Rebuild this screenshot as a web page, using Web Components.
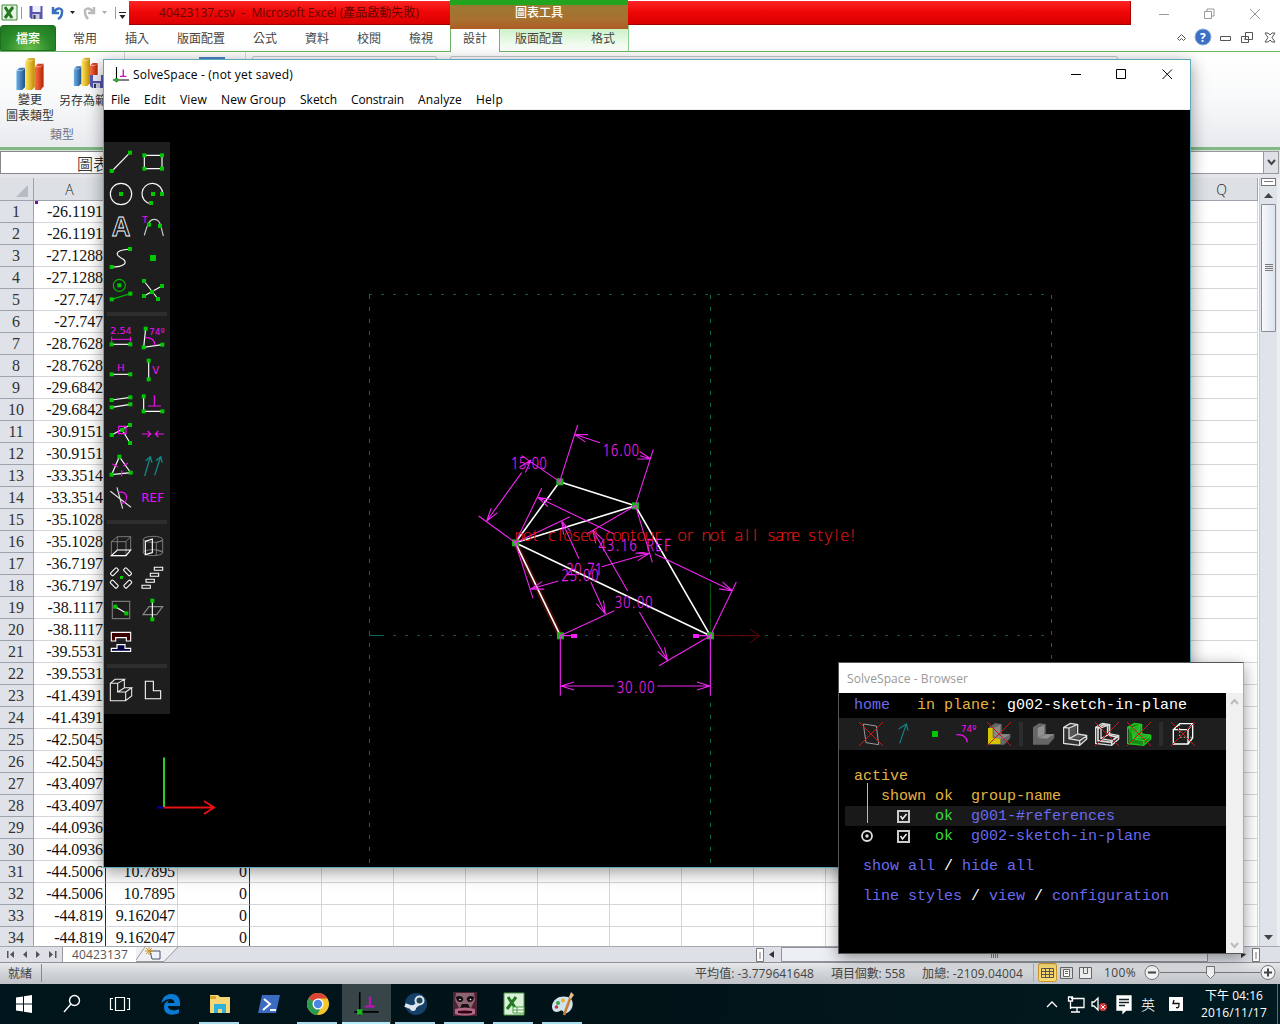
<!DOCTYPE html>
<html lang="zh-Hant">
<head>
<meta charset="utf-8">
<title>Desktop</title>
<style>
html,body{margin:0;width:1280px;height:1024px;overflow:hidden;background:#fff}
body{font-family:"Open Sans","Noto Sans CJK TC",sans-serif;font-size:12px}
</style>
</head>
<body>
<desk-top></desk-top>
<script>
const make = (name, css, html, after) => customElements.define(name, class extends HTMLElement {
  connectedCallback() {
    if (this.shadowRoot) return;
    const r = this.attachShadow({mode: 'open'});
    r.innerHTML = `<style>:host{display:block;box-sizing:border-box}*{box-sizing:border-box}svg{display:block}${css}</style>` + (typeof html === 'function' ? html(this) : html);
    if (after) after(this, r);
  }
});

/* Text run stretched to a fixed advance width through letter spacing. */
make('ui-text', ':host{display:block;flex:none;white-space:pre}span{display:inline-block}', '<span><slot></slot></span>', (el, r) => {
  const w = +el.getAttribute('w');
  if (!w) return;
  const s = r.querySelector('span');
  el.style.width = w + 'px';
  s.style.letterSpacing = (w - s.getBoundingClientRect().width) / el.textContent.length + 'px';
});

/* ---------- icon helpers (three units per pixel, centred on 0,0) ---------- */
const G = '#00c800', M = '#f010f0', W = '#fafafa';
const sq = (...p) => p.map(([x, y]) => `<rect x="${x - 6}" y="${y - 6}" width="12" height="12" fill="${G}"/>`).join('');
const ln = (d, c = W, w = 3.5, f = 'none') => `<path d="${d}" stroke="${c}" stroke-width="${w}" fill="${f}"/>`;
const tx = (t, x, y, s, w, c = M) => `<text x="${x}" y="${y}" font-size="${s}" textLength="${w}" lengthAdjust="spacingAndGlyphs" fill="${c}" font-family="DejaVu Sans">${t}</text>`;
const icon = (b) => `<svg width="32" height="32" viewBox="-48 -48 96 96">${b}</svg>`;
const cross = ln('M-36-36L36 36M36-36L-36 36', '#c81818', 3);

const tools = [
  ln('M-27 27L27-28') + sq([-28, 27], [27, -28]),
  ln('M-26-20H27V20H-26Z', W, 3.5) + sq([-26, -20], [27, -20], [-26, 20], [27, 20]),
  `<circle r="32" fill="none" stroke="${W}" stroke-width="3.5"/>` + sq([0, 0]),
  ln('M29 0A31 31 0 1 0 -6 30') + sq([0, 0], [27, 0], [-6, 27]),
  `<text x="-28" y="31" font-size="84" font-weight="bold" textLength="56" lengthAdjust="spacingAndGlyphs" fill="none" stroke="${W}" stroke-width="2.600" font-family="Liberation Sans">A</text>`,
  tx('T', -33, -10, 27, 17) + ln('M-26 28C-18 0-13-20 4-20C22-20 24 2 31 30', '#ccc') + sq([-12, -4], [21, 0]),
  ln('M-27 27C8 26 21 15 7 4C-12-6-30-22 27-27') + sq([-28, 27], [27, -27]),
  `<rect x="-9" y="-9" width="18" height="18" fill="${G}"/>`,
  `<circle cx="-5" cy="-14" r="18" fill="none" stroke="#00b400" stroke-width="3.500"/>` + ln('M-28 28L28 11', '#00b400') + sq([-5, -14], [-28, 28], [28, 11]),
  ln('M-27-27L15 27M-27 18L27-12') + sq([-27, -27], [15, 27], [-27, 18], [27, -12], [-3, 6]),
  0,
  tx('2.54', -32, -11, 27, 64) + ln('M-28 4H28M-28-4V12M28-4V12', M, 3) + ln('M-28 19H28') + sq([-28, 19], [28, 19]),
  tx('74º', -12, -9, 28, 47) + ln('M-22-28L-28 28L28 20') + ln('M-22-1Q4-2 6 22', M) + sq([-22, -28], [-28, 28], [28, 20]),
  tx('H', -12, 2, 27, 23) + ln('M-28 13H28') + sq([-28, 13], [28, 13]),
  tx('V', -2, 12, 29, 21) + ln('M-13-28V28') + sq([-13, -28], [-13, 28]),
  ln('M-28-6L28-14M-28 16L28 7') + sq([-28, -6], [28, -14], [-28, 16], [28, 7]),
  ln('M-28-17V28H28') + ln('M4-20V12M-15 12H24', M) + sq([-28, -17], [-28, 28], [28, 28]),
  ln('M-28 3L27-27M4-12L27 27') + sq([-28, 3], [4, -12], [27, -27], [27, 27]) + ln('M-7-23H15V-1H-7Z', M),
  ln('M-33 0H-7M-16-9L-7 0L-16 9M33 0H7M16-9L7 0L16 9', M),
  ln('M-5-28L-28 26L29 20Z') + ln('M-26-6L-9 3M7 0L21-9M2 13V31', M) + sq([-5, -28], [-28, 26], [29, 20]),
  ln('M-25 30L-8-28M-22-16L-8-28L-3-10M5 28L23-28M9-16L23-28L28-10', '#108888', 4),
  ln('M-32-20L30 28M-12-32L5 32', '#ddd') + ln('M-7-17C20-22 26 8 2 17', M),
  tx('REF', -35, 13, 36, 68),
  0,
  ln('M-29-13H15V29H-29ZM-11-28H29V12M-29-13L-11-28V12M15-13L29-28', '#888', 2.5) + ln('M-29 29H15L29 12H-11Z', '#fff', 3.5),
  `<g fill="none" stroke="#888" stroke-width="2.5"><ellipse cy="-20" rx="29" ry="9"/><ellipse cy="20" rx="29" ry="9"/><path d="M-29-20V20M29-20V20M10-10L28-16M10 12L28 18M10-10V28"/></g>` + ln('M-23-14L-2-21V20L-23 26Z', '#fff', 3.5),
  [[-20, -19, -45], [20, -19, 45], [-20, 18, 45], [20, 18, -45]].map(([x, y, a]) => `<rect x="-13" y="-5" width="26" height="11" rx="3" transform="translate(${x} ${y})rotate(${a})" fill="none" stroke="#fff" stroke-width="3.2"/>`).join('') + `<rect x="-3" y="-6" width="9" height="9" fill="${G}"/>`,
  ln('M4-32H29V-23H4ZM-8-14H17V-5H-8ZM-21 4H4V13H-21ZM-33 22H-8V31H-33Z', '#fff', 3.2),
  ln('M-26-26H26V26H-26Z', '#777') + ln('M-17-10L16 10') + sq([-17, -10], [16, 10]),
  ln('M-30 14L-12-10H29L11 14Z', '#888') + ln('M-2-28V28', '#fff') + sq([-2, -28], [-2, 28]),
  ln('M-29-29H29V-3H16V-13H-16V-3H-29Z', '#fff', 3.4, '#3c0000') + ln('M-29 28V19H-12V8H12V19H29V28Z', '#fff', 3.4, '#000040'),
  '',
  0,
  ln('M-32 32V-20H-10V6H14V32ZM-32-20L-18-32H10L-10-20M10-32V-6L-10 6M10-7H32L14 6M32-7V18L14 32', '#eee', 3.2),
  ln('M-23-26H1V2H23V26H-23Z', '#fff', 3.2)
];

make('tool-palette', ':host{width:66px;background:#1e1e1e;padding:4px 1px 8px;display:flex;flex-wrap:wrap}svg{flex:none}hr{flex:none;width:60px;height:4px;margin:6px 2px;border:0;background:#2e2e2e}',
  tools.map(t => t === 0 ? '<hr>' : icon(t)).join(''));

/* ---------- SolveSpace drawing ---------- */
const sketch = () => {
  const P1 = [269, 215], P2 = [496, 287], P3 = [136, 398], P4 = [271, 677], O = [721, 677];
  const seg = (a, b) => `M${a}L${b}`;
  const arrow = (from, to) => {
    const a = Math.atan2(to[1] - from[1], to[0] - from[0]), q = s => [to[0] - 41 * Math.cos(a + s), to[1] - 41 * Math.sin(a + s)];
    return seg(from, to) + seg(q(.29), to) + seg(q(-.29), to);
  };
  const ext = [[P1, [323, 45]], [P2, [550, 118]], [P1, [155, 137]], [P3, [26, 318]], [P3, [215, 235]], [O, [799, 516]], [P3, [300, 320]], [P4, [433, 602]], [P3, [189, 565]], [[499, 295], [547, 457]], [P2, [350, 372]], [O, [567, 767]], [P4, [271, 857]], [O, [721, 857]], [[280, 677], [305, 677]], [[685, 677], [715, 677]]];
  const arr = [[[390, 98], [313, 73]], [[510, 137], [543, 147]], [[155, 188], [50, 333]], [[170, 165], [183, 150]], [[432, 372], [203, 262]], [[555, 432], [788, 543]], [[327, 446], [275, 333]], [[362, 515], [406, 612]], [[265, 513], [182, 537]], [[395, 470], [538, 430]], [[473, 543], [368, 360]], [[508, 606], [593, 752]], [[432, 828], [273, 828]], [[562, 828], [720, 828]]];
  /* Stroke-font label: every glyph is centred in a cell of its own. */
  const cells = (t, x, y, w, k) => {
    const narrow = c => c === '.' ? .62 : 1, total = [...t].reduce((s, c) => s + narrow(c), 0);
    let p = 0;
    const xs = [...t].map(c => { const v = (p + narrow(c) / 2) * w / total / k; p += narrow(c); return v.toFixed(1); });
    return `<text transform="translate(${x} ${y}) scale(${k} 1)" text-anchor="middle" x="${xs.join(' ')}" y="0">${t}</text>`;
  };
  const label = (t, x, y, w) => cells(t, x, y, w, .72);
  const msg = 'not closed contour, or not all same style!';
  return `<svg width="1086" height="757" viewBox="104 110 1086 757">
  <g stroke="#0d6a58" fill="none" stroke-width="1"><path stroke-dasharray="3 9" d="M369 294.5H1051M369 635.5H1051" opacity=".85"/><path stroke-dasharray="4 8" d="M369.500 295V867M710.5 295V867M1051.500 295V867"/><path d="M371 635.5h11"/></g>
  <g transform="translate(470 410) scale(.333333)" fill="none">
    <path d="M721 520V677" stroke="#075507" stroke-width="3"/><path d="M725 677H868M841 657L868 677L841 697" stroke="#6c0505" stroke-width="3"/>
    <path d="${seg(P3, P4)}" stroke="#420a04" stroke-width="17"/>
    <path d="${[[P1, P2], [P1, P3], [P2, P3], [P2, O], [P3, O], [P3, P4]].map(s => seg(...s)).join('')}" stroke="#fff" stroke-width="4.800"/>
    ${[P1, P2, P3, P4, O].map(([x, y]) => `<rect x="${x - 10}" y="${y - 10}" width="21" height="21" fill="#17b317"/><path d="M${x - 4} ${y + 4}l4-7 5 4-3 6z" stroke="#a070a0" stroke-width="3"/>`).join('')}
    <path d="${ext.map(s => seg(...s)).join('') + arr.map(s => arrow(...s)).join('')}" stroke="#f024f0" stroke-width="3.300"/>
    <path d="M303 672h18v12h-18zM669 672h18v12h-18z" fill="#f020f0"/>
    <g fill="#f024f0" font-family="Open Sans" font-weight="300" stroke="#f024f0" stroke-width=".8" font-size="52">${label('16.00', 398, 137, 110) + label('15.00', 123, 178, 108) + label('43.16_REF', 383, 424, 222) + label('20.71', 288, 495, 110) + label('25.00', 273, 514, 114) + label('30.00', 433, 595, 116) + label('30.00', 439, 849, 116)}</g>
    <text text-anchor="middle" y="393" font-family="Open Sans" font-weight="300" font-size="49" stroke="#d81414" stroke-width=".6" fill="#d81414" x="${[...msg].map((c, i) => (148 + i * 24.4).toFixed(1)).join(' ')}">${msg}</text>
  </g>
  <path d="M157 807.500h7" stroke="#0000b0" stroke-width="2"/><path d="M164 757.500V807" stroke="#28d028" stroke-width="2"/><path d="M164 807.500H214M204 801l10 6.500l-10 6.500" stroke="#e81010" stroke-width="2" fill="none"/>
  </svg>`;
};

const logo = (s, c = '#000') => `<svg width="${s}" height="${s}" viewBox="0 0 20 20"><path d="M5 1V18M1 15.500H19" stroke="${c}" stroke-width="1.200"/><path d="M12.500 4V11M9 11.500H16" stroke="#c010c0" stroke-width="1.500"/><path d="M3 13.500h4v4H3z" fill="#18b818"/></svg>`;

make('cad-canvas', ':host{position:relative;flex:1;background:#000;overflow:hidden}tool-palette{position:absolute;left:0;top:32px}', () => sketch() + '<tool-palette></tool-palette>');

make('cad-window', `:host{position:absolute;left:103px;top:59px;width:1088px;height:809px;border:1px solid #5aa9bd;background:#fff;display:flex;flex-direction:column;box-shadow:0 4px 16px rgba(0,0,0,.4)}
.t{height:29px;display:flex;align-items:center;padding-left:8px;flex:none;color:#000}.t ui-text{margin-left:3px;margin-right:auto}.t svg:last-child{margin-right:16px}
.m{height:21px;display:flex;align-items:center;padding-left:7px;gap:14px;flex:none;border-bottom:1px solid #eee;color:#000}`,
  `<div class="t">${logo(18)}<ui-text w="160">SolveSpace - (not yet saved)</ui-text><svg width="104" height="14" viewBox="0 0 104 14" fill="none" stroke="#000"><path d="M1 6.500h10M46.500 1.500h9v9h-9zM92.500 1.500l9.500 9.500M102 1.500l-9.500 9.500"/></svg></div>
  <div class="m"><ui-text w="19">File</ui-text><ui-text w="22">Edit</ui-text><ui-text w="27">View</ui-text><ui-text w="65">New Group</ui-text><ui-text w="37">Sketch</ui-text><ui-text w="53">Constrain</ui-text><ui-text w="44">Analyze</ui-text><ui-text w="27">Help</ui-text></div><cad-canvas></cad-canvas>`);

/* ---------- SolveSpace property browser ---------- */
const body = (a, b, c) => `<path d="M-30-20L-12-32L8-30V0L-12 8L-30 18Z" fill="${a}"/><path d="M-30 18L-18 8L8 0H34V12L16 32H-30Z" fill="${a}"/><path d="M-16-18L4-27V2L-16 10Z" fill="${b}"/><path d="M-16 12L8 1H34L12 14Z" fill="${b}"/>${c ? ln('M-34-20L-14-32L8-28V0L35 5V15L14 34L-34 28ZM-34-20L-18-18V14L14 20V34M-18-18L6-28M14 20L35 6M-18 14L8 0', c, 4) : ''}`;
const bicons = [
  ln('M-23-30L16-24L23 32L-15 26Z', '#999', 3) + cross,
  ln('M-10 28L10-30M-13-15L10-30L15-10', '#108080', 3.5),
  `<rect x="-9" y="-9" width="18" height="18" fill="${G}"/>`,
  tx('74º', -18, -5, 27, 46) + ln('M-32 2Q-2 0 1 25', M),
  body('#666', '#888') + `<path d="M-33-18H-19V11L4 14V30H-33Z" fill="#d5c500"/>` + cross,
  0, body('#666', '#909090'), body('#333', '#555', '#ddd'), body('#222', '#1e1e1e', '#ddd') + ln('M-27-17L-10-28L2-25V3L29 9L12 25L-27 20Z', '#ddd', 5) + cross,
  body('#188a18', '#2aa52a', '#1ec81e') + ln('M-31-18L-6 18L4-26L-18 12L30 8', '#30d030', 2.500) + cross,
  0, ln('M-29-13H15V30H-29ZM-29-13L-10-31H29L15-13M29-31V12L15 30', '#fff', 4) + ln('M-10-28V10H29M-10 10L-29 28', '#ccc', 3, 'none').replace('/>', ' stroke-dasharray="4 6"/>') + cross
];
const check = '<svg width="13" height="13" viewBox="0 0 13 13"><path d="M1 1h11v11H1z" fill="none" stroke="#ccc" stroke-width="2"/><path d="M3.500 6l2 3 4-5" fill="none" stroke="#eee" stroke-width="1.500"/></svg>';
make('group-row', `:host{display:flex;align-items:center;height:20px;margin-left:5px;padding-left:16px}:host([alt]){background:#191919}.r{width:12px;margin-right:24px}ui-text.k{margin:0 18px 0 25px;color:#36dc36}ui-text.n{color:#6a6aee}`,
  el => `<div class="r">${el.hasAttribute('active') ? '<svg width="12" height="12"><circle cx="6" cy="6" r="5" fill="none" stroke="#ddd" stroke-width="1.800"/><circle cx="6" cy="6" r="1.700" fill="#ddd"/></svg>' : ''}</div>${check}<ui-text class="k" w="18">ok</ui-text><ui-text class="n" w="${el.textContent.length * 9}">${el.textContent}</ui-text>`);

make('browser-window', `:host{position:absolute;left:838px;top:662px;width:406px;height:292px;border:1px solid #555;border-right-color:#aaa;background:#000;box-shadow:0 4px 15px rgba(0,0,0,.4);display:flex;flex-direction:column}
.t{height:30px;background:#fff;color:#999;display:flex;align-items:center;padding-left:8px;flex:none}
.b{display:flex;flex:1}.c{flex:1;font:15px "Liberation Mono",monospace;color:#6a6aee;position:relative;padding-left:1px}
.l{height:20px;display:flex;align-items:center;padding-left:14px}.l.top{height:25px}.l.one{padding-left:23px}.o{color:#e5b440}.w{color:#fff}
.i{display:flex;height:32px;background:#1e1e1e;padding-left:16px;margin:0 0 16px -1px;align-items:center}.i b{width:4px;height:24px;background:#2c2c2c;margin:0 4px;flex:none}.i svg{flex:none}
.v{position:absolute;left:28px;top:90px;width:1px;height:40px;background:#f0b830}
.s{width:17px;background:#f0f0f0;display:flex;flex-direction:column;justify-content:space-between;padding:5px 4px 4px}`,
  `<div class="t"><ui-text w="121">SolveSpace - Browser</ui-text></div><div class="b"><div class="c"><div class="l top"><ui-text w="63">home   </ui-text><ui-text w="90" class="o">in plane: </ui-text><ui-text w="180" class="w">g002-sketch-in-plane</ui-text></div>
  <div class="i">${bicons.map(b => b === 0 ? '<b></b>' : icon(b)).join('')}</div>
  <div class="l o"><ui-text w="54">active</ui-text></div><div class="l o"><ui-text w="207">   shown ok  group-name</ui-text></div>
  <group-row alt>g001-#references</group-row><group-row active>g002-sketch-in-plane</group-row>
  <div class="l one" style="margin-top:10px"><ui-text w="81">show all </ui-text><ui-text w="18" class="w">/ </ui-text><ui-text w="72">hide all</ui-text></div>
  <div class="l one" style="margin-top:10px"><ui-text w="108">line styles </ui-text><ui-text w="18" class="w">/ </ui-text><ui-text w="45">view </ui-text><ui-text w="18" class="w">/ </ui-text><ui-text w="117">configuration</ui-text></div><div class="v"></div></div>
  <div class="s"><svg width="9" height="8"><path d="M1 6l3.500-4L8 6" fill="none" stroke="#bbb" stroke-width="2"/></svg><svg width="9" height="8"><path d="M1 2l3.500 4L8 2" fill="none" stroke="#bbb" stroke-width="2"/></svg></div></div>`);

/* ---------- Excel ---------- */
const bars = `<linearGradient id="b1"><stop stop-color="#6ab0e8"/><stop offset="1" stop-color="#1f4f86"/></linearGradient><linearGradient id="b2"><stop stop-color="#ffe860"/><stop offset="1" stop-color="#c08a00"/></linearGradient><linearGradient id="b3"><stop stop-color="#ff7048"/><stop offset="1" stop-color="#b52200"/></linearGradient>
<path d="M1 14l3-3h6v20l-3 3H1z" fill="url(#b1)"/><path d="M10 4l3-3h7v30l-3 3h-7z" fill="url(#b2)"/><path d="M20 10l3-3h6v23l-3 4h-6z" fill="url(#b3)"/><path d="M1 14h6l3-3M10 4h7l3-3M20 10h6l3-3" fill="none" stroke="#fff" opacity=".5"/>`;
const disk = '<path d="M1 1h13v13H3l-2-2z" fill="#5456b0"/><path d="M4 1h8v6H4z" fill="#eef"/><path d="M4 9h7v5H4z" fill="#ccd"/><path d="M5 10h2v4H5z" fill="#335"/>';

make('excel-title', `:host{height:25px;display:flex;position:relative;background:#fff}
.q{width:129px;display:flex;align-items:center;flex:none}.r{height:24px;margin-top:1px;background:linear-gradient(#fb2525,#f00808 45%,#d90000);border-bottom:1px solid #a00000;display:flex;align-items:center;padding-bottom:2px;color:#650700}
.r.a{width:321px;padding-left:30px}.r.b{width:503px;border-right:1px solid #a00}.x{width:178px;height:29px;border-top:5px solid #22a51e;background:linear-gradient(#9b7a32,#a97030 60%,#ad5c24);color:#fff;display:flex;justify-content:center;padding-top:1px;z-index:1;font-weight:500}.z{margin-left:28px;margin-top:7px}.x ui-text{line-height:13px}`,
  `<div class="q"><svg width="129" height="24" viewBox="0 0 129 24"><path d="M2 4h15v15H2z" fill="#e8f4e4" stroke="#3b8b3b"/><path d="M5 6l7 11M13 6l-8 11" stroke="#237a23" stroke-width="3"/><path d="M21.500 6v12M115.500 6v12" stroke="#999"/><g transform="translate(28.500 4)">${disk}</g><path d="M53 6v6h6M54 11c4-6 9-3 8 0c0 4-2 6-4 7" fill="none" stroke="#3a6fc0" stroke-width="2.500"/><path d="M70 10h5l-2.500 3zM119.500 14h6l-3 4z" fill="#222"/><path d="M119 11.500h7" stroke="#222"/><path d="M94 6v6h-6M93 11c-4-6-9-3-8 0c0 4 2 6 3 7" fill="none" stroke="#bbb" stroke-width="2.500"/><path d="M102 10h5l-2.500 3z" fill="#aaa"/></svg></div>
  <div class="r a"><ui-text w="260">40423137.csv  -  Microsoft Excel (產品啟動失敗)</ui-text></div><div class="x"><ui-text w="48">圖表工具</ui-text></div><div class="r b"></div>
  <svg class="z" width="104" height="14" fill="none" stroke="#999"><path d="M0 7.500h10M45.500 4.500h7v7h-7zM48 4V2h7v7h-2M91 2l10 10M101 2l-10 10"/></svg>`);

make('excel-tabs', `:host{height:27px;display:flex;background:#fff;border-bottom:1.500px solid #6fb56b;position:relative;align-items:stretch;color:#444}
div{display:flex;align-items:center;justify-content:center;padding-top:0;flex:none}.f{width:56px;background:radial-gradient(at 50% 100%,#6cc24c,#2a8a2a 60%,#1f7520);color:#fff;border-radius:3px 3px 0 0;border:1px solid #1d6e1f;font-weight:500}
.cx{background:linear-gradient(#c3f0bd,#fff);padding:0;border-right:1px solid #8bd08b;width:179px}.ac{width:50px;height:27px;border:1px solid #6fb56b;border-bottom:0;background:#fff;border-radius:3px 3px 0 0;padding-bottom:2px}.e{margin-left:auto;width:116px}`,
  `<div class="f"><ui-text>檔案</ui-text></div><div style="width:58px">常用</div><div style="width:46px">插入</div><div style="width:82px">版面配置</div><div style="width:46px">公式</div><div style="width:58px">資料</div><div style="width:46px">校閱</div><div style="width:58px">檢視</div><div class="cx"><div class="ac">設計</div><div style="width:78px">版面配置</div><div style="width:50px">格式</div></div>
  <div class="e"><svg width="116" height="22" viewBox="0 0 116 22" fill="none" stroke="#555"><path d="M13.500 11.500l4-4 4 4-2 2-2-2-2 2z"/><circle cx="39" cy="10" r="8" fill="#3c70c4" stroke="#8fb0dd"/><path d="M56.500 9.500h10v4h-10zM81.500 5.500h7v7h-7zM77.500 9.500h7v6h-7zM80 12h2M101 6h3l2 2 2-2h3l-3 4.500 3 4.500h-3l-2-2-2 2h-3l3-4.500z"/><text x="36" y="14.500" fill="#fff" stroke="none" font-size="12" font-weight="bold">?</text></svg></div>`);

make('excel-ribbon', `:host{height:98px;background:linear-gradient(#fff,#f8f9fa 50%,#e8eaee);display:flex;border-bottom:3px solid #80b886;color:#333}
.g{display:flex;flex-direction:column;width:125px;border-right:1px solid #d5d5d5;flex:none}.i{display:flex;height:72px}.c{display:flex;flex-direction:column;align-items:center;width:60px;line-height:16px;padding-top:5px;flex:none}.c svg{margin-bottom:1px}.n{color:#68738a;text-align:center;line-height:16px;padding-top:3px}.h{margin-top:4px;height:20px;border:1px solid #c5c8cc;border-radius:2px;flex:none}
.c.s{width:46px;align-items:flex-start;overflow:hidden}.s svg{margin-left:12px}`,
  `<div class="g"><div class="i"><div class="c"><svg width="32" height="35" viewBox="0 0 30 35">${bars}</svg><span>變更</span><span>圖表類型</span></div><div class="c s"><svg width="36" height="35" viewBox="0 0 34 35"><g transform="scale(.85)">${bars}</g><g transform="translate(16 17)">${disk}</g></svg><ui-text style="width:46px;overflow:hidden;margin-left:-1px">另存為範</ui-text></div></div><div class="n">類型</div></div>
  <div style="width:121px;border-right:1px solid #ddd"><div style="margin:5px 0 0 74px;width:26px;height:20px;background:#4c83c8"></div></div><div class="h" style="margin-left:6px;width:185px"></div><div class="h" style="margin-left:13px;width:668px"></div>`);

make('formula-bar', ':host{height:28px;background:linear-gradient(#cfe3d2,#e3e5ea 3px);display:flex;padding:1px 1px 4px 0}.n{width:240px;background:#fff;border:1px solid #888;padding-left:76px;color:#000;font:16px/22px "Noto Sans CJK TC",sans-serif;font-weight:300}.f{flex:1;border:1px solid #999;border-left:0;background:#fff}.d{width:15px;border:1px solid #999;border-left:0;background:#dde0e6;display:flex;align-items:center;justify-content:center}',
  '<div class="n">圖表</div><div class="f"></div><div class="d"><svg width="9" height="7"><path d="M1 1l3.500 4L8 1" fill="none" stroke="#444" stroke-width="2"/></svg></div>');

const colA = '-26.1191 -27.1288 -27.747 -28.7628 -29.6842 -30.9151 -33.3514 -35.1028 -36.7197 -38.1117 -39.5531 -41.4391 -42.5045 -43.4097 -44.0936 -44.5006 -44.819'.split(' ');
make('sheet-grid', `:host{flex:1;min-width:0;overflow:hidden;font:16px "Liberation Serif",serif;color:#111;background:#fff}
.r{display:flex;height:22px}.r>*{flex:none;width:72px;border-right:1px solid #d4d6da;border-bottom:1px solid #d4d6da;text-align:right;line-height:21px;padding-right:2px;height:22px;letter-spacing:-.08px}
.r>.h{width:34px;background:#dfe2e8;text-align:center;padding:0 1px 0 0;border-color:#9ea3ab;color:#333}.k>*{background:#dde1e6;text-align:center;padding:0;height:23px;border-color:#9ea3ab;font-family:"Open Sans";font-size:14px;line-height:24px;font-weight:300;color:#222}.r.k{height:23px}.r.k>*{height:23px;line-height:24px;border-color:#9ea3ab;background:#dde1e6;text-align:center;padding:0}.r.k>.h{padding:7px 4px 0 15px}.r>.n{border-right-color:#1818b0}.p{position:relative}.p::before,.p::after{content:"";position:absolute;width:3px;height:3px;top:0;left:1px;background:#7010a0}.p::after{left:69px}`,
  `<div class="r k"><span class="h"><svg width="14" height="14"><path d="M13 0v12H1z" fill="#b7bbc2"/></svg></span>${[...'ABCDEFGHIJKLMNOPQ'].map(c => `<span>${c === 'A' || c === 'Q' ? c : ''}</span>`).join('')}</div>` +
  Array.from({length: 34}, (_, i) => `<div class="r"><span class="h">${i + 1}</span><span class="n${i ? '' : ' p'}">${colA[i >> 1]}</span><span>${i > 29 ? (i > 31 ? '9.162047' : '10.7895') : ''}</span><span class="n">${i > 29 ? 0 : ''}</span>${'<span></span>'.repeat(14)}</div>`).join(''));

make('v-scroll', ':host{width:21px;background:#dfe3ea;display:flex;flex-direction:column;align-items:center;border-left:1px solid #c9ccd2;border-right:3px solid #eee;padding-bottom:6px}.a{width:15px;height:8px;border:1px solid #777;background:#fff;margin-bottom:7px;padding:2px}.a::after{content:"";display:block;height:1px;background:#777}.t{width:15px;height:128px;border:1px solid #888d97;border-radius:1px;background:linear-gradient(90deg,#f8f9fb,#dde2ec);margin:6px 0 auto;display:flex;align-items:center;justify-content:center}',
  '<div class="a"></div><svg width="9" height="5"><path d="M0 5l4.500-5L9 5z" fill="#444"/></svg><div class="t"><svg width="8" height="8" stroke="#777"><path d="M0 .5h8M0 2.500h8M0 4.500h8M0 6.500h8"/></svg></div><svg width="9" height="5"><path d="M0 0h9L4.500 5z" fill="#444"/></svg>');

make('sheet-tabs', ':host{height:16px;background:#dde1e7;border-top:1px solid #a5a9b0;display:flex;color:#555}svg{flex:none}.t{width:74px;background:#fff;border-left:1px solid #999;padding-left:9px;line-height:15px}.s{margin-left:auto;width:524px}',
  `<svg width="62" height="15" fill="#555"><path d="M7 4h1.500v7H7zM14 4v7l-4-3.500zM27 4v7l-4-3.500zM36 4v7l4-3.500zM49 4v7l4-3.500zM55 4h1.500v7H55z"/></svg><div class="t"><ui-text w="56">40423137</ui-text></div>
  <svg width="44" height="15"><path d="M0 0h42L28 15H0z" fill="#eef0f3"/><path d="M9 0L-1 14.500H28L42 0" fill="none" stroke="#999"/><path d="M14 4h10v8h-8z" fill="#eef3ff" stroke="#456"/><path d="M13 0v8M9 4h8M10 1l6 6M16 1l-6 6" stroke="#d59420"/></svg>
  <svg class="s" height="15" viewBox="756 0 524 15"><path d="M756.500 1.500h7v13h-7zM1252.500 1.500h7v13h-7z" fill="#fff" stroke="#777"/><path d="M760 5v7M1256 5v7" stroke="#777"/><path d="M774 4v7l-5-3.500zM1241 4v7l5-3.500z" fill="#333"/><path d="M781.500.500h426v14h-426z" fill="#eceff4" stroke="#8f949c"/><path d="M991.500 4v7M993.500 4v7M995.500 4v7M997.500 4v7" stroke="#888"/></svg>`);

make('status-bar', `:host{height:22px;display:flex;align-items:center;background:linear-gradient(#e6e8ea,#d2d5d8 45%,#bfc3c7);border-top:1px solid #8e9297;color:#444;padding-left:8px;padding-bottom:2px}.a{margin-right:auto;display:flex;align-items:center;gap:9px}.a i{width:1px;height:18px;background:#888}ui-text{margin-right:17px}svg{flex:none}`,
  `<div class="a"><ui-text w="24" style="margin:0">就緒</ui-text><i></i></div><ui-text w="119">平均值: -3.779641648</ui-text><ui-text w="74">項目個數: 558</ui-text><ui-text w="101" style="margin-right:10px">加總: -2109.04004</ui-text>
  <svg width="71" height="20" viewBox="1033 0 71 20" fill="none" stroke="#666"><path d="M1033.500 1v18" stroke="#aaa"/><rect x="1038.500" y=".5" width="18" height="18" rx="2" fill="#fadb72" stroke="#c8952a"/><path d="M1041.500 5.500h12v9h-12zM1041.500 8.500h12M1041.500 11.500h12M1045.500 5.500v9M1049.500 5.500v9" stroke="#555" fill="none"/><path d="M1060.500 4.500h12v11h-12z" fill="#ddd"/><path d="M1063.500 6.500h6v7h-6zM1065 8.500h3M1065 10.500h3" fill="#fff"/><path d="M1079.500 4.500h12v11h-12z" fill="#eee"/><path d="M1083.500 4.500v6h4v-6"/></svg><ui-text w="32" style="margin-right:8px">100%</ui-text>
  <svg width="136" height="20" viewBox="1144 0 136 20" fill="#f2f3f4" stroke="#777"><path d="M1160 9.500h100"/><circle cx="1152" cy="9.500" r="7"/><circle cx="1268" cy="9.500" r="7"/><path d="M1148 9.500h8M1264 9.500h8M1268 5.500v8" stroke="#444" stroke-width="2"/><path d="M1206.500 3.500h8v8l-4 4-4-4z"/></svg>`);

make('excel-window', ':host{width:1280px;height:984px;display:flex;flex-direction:column}.g{display:flex;height:768px;flex:none}excel-title,excel-tabs,excel-ribbon,formula-bar,sheet-tabs,status-bar{flex:none}',
  '<excel-title></excel-title><excel-tabs></excel-tabs><excel-ribbon></excel-ribbon><formula-bar></formula-bar><div class="g"><sheet-grid></sheet-grid><v-scroll></v-scroll></div><sheet-tabs></sheet-tabs><status-bar></status-bar>');

/* ---------- Taskbar ---------- */
make('task-item', ':host{width:49px;height:40px;display:flex;flex-direction:column;align-items:center;justify-content:center;border-bottom:0;position:relative}:host([sys]){width:48px}:host([active]){background:#374549}.u{position:absolute;bottom:0;left:4px;right:5px;height:2px;background:#a9dcea}:host([active]) .u{left:0;right:1px;background:#b5ecfa}',
  el => `<slot></slot>${el.hasAttribute('open') ? '<div class="u"></div>' : ''}`);
const ti = (a, b) => `<task-item ${a}><svg width="24" height="24" viewBox="0 0 24 24">${b}</svg></task-item>`;
make('task-bar', ':host{height:40px;background:linear-gradient(90deg,#00151b,#021318 50%,#001a20);display:flex;color:#fff;flex:none}.t{margin-left:auto;display:flex;align-items:center}.k{display:flex;flex-direction:column;align-items:center;line-height:17px;margin:0 10px 0 18px}.e{width:3px;border-left:1px solid #667;align-self:stretch}',
  ti('sys', '<path d="M4 5.500l7-1v7H4zM12 4.300l8-1.200v8.400h-8zM4 12.500h7v7l-7-1zM12 12.500h8V21l-8-1.200z" fill="#fff"/>') +
  ti('sys', '<g fill="none" stroke="#fff" stroke-width="1.400"><circle cx="14.500" cy="8.500" r="5"/><path d="M11 12L4 20"/></g>') +
  ti('sys', '<path d="M7.500 5.500h9v13h-9zM5 6.500H2.500v11H5M19 6.500h2.500v11H19" fill="none" stroke="#fff" stroke-width="1.200"/>') +
  ti('style="margin-left:2px"', '<path d="M2.500 11C3.500 4.500 8 2 12.500 2c6 0 8.500 4 8.500 9v3H9c0 4 6 6 11 3v4c-8 3.500-15 1.500-15-6 0-4 3-6 5.500-7-1.500 1-2 2-2 3h7c0-5.500-8-5.500-13 0z" fill="#0a7bd5"/>') +
  ti('open', '<path d="M2 3h8l2 2h10v16H2z" fill="#f6d774"/><path d="M2 4h6v3H2z" fill="#d8a72c"/><path d="M6 21v-9h12v9h-4v-4h-4v4z" fill="#2eb2dc"/>') +
  ti('', '<path d="M5 3h18l-4 18H1z" fill="#3b6cc0"/><path d="M7 7l6 5-7 6M13 18h6" fill="none" stroke="#fff" stroke-width="2"/>') +
  ti('open', '<circle cx="12" cy="12" r="11" fill="#f5c62d"/><path d="M12 12L2.500 6.500A11 11 0 0 1 21.500 6.500H12z" fill="#dc4336"/><path d="M12 12L2.500 6.500A11 11 0 0 0 11 23l5-9z" fill="#2a9b51"/><circle cx="12" cy="12" r="5.500" fill="#fff"/><circle cx="12" cy="12" r="4.200" fill="#4b86e4"/>') +
  `<task-item open active>${logo(27)}</task-item>` +
  ti('open', '<circle cx="12" cy="12" r="11" fill="#154068"/><path d="M1 13l8 3M9 16l6-5" stroke="#dce6ee" stroke-width="4"/><circle cx="15.500" cy="8.500" r="4" fill="#245" stroke="#dce6ee" stroke-width="2"/><circle cx="9" cy="16" r="3" fill="#dce6ee"/>') +
  ti('open', '<path d="M0 0h24v26H0z" fill="#4b2435"/><path d="M3 1h18l1 7-4 8H6L2 8z" fill="#8d6472"/><path d="M3 5c3-2 6-1 7 1s-1 4-3 4-4-2-4-5zM14 6c1-2 4-3 7-1 0 3-2 5-4 5s-4-2-3-4zM9 12h6l2 4H7z" fill="#160e14"/><path d="M2 17q10-3 20 0v5q-10 3-20 0z" fill="#b06888"/><path d="M5 19q7-1 14 0v2q-7 1-14 0z" fill="#301"/><circle cx="7" cy="7.500" r=".8" fill="#fff"/><circle cx="17.500" cy="7.500" r=".8" fill="#fff"/>') +
  ti('open', '<path d="M2 1h20v22H2z" fill="#dcefd8" stroke="#4a9a4a"/><path d="M6 5l8 12M14 5L5 17" stroke="#237a23" stroke-width="3"/><path d="M11 15h11v6H11z" fill="#f6fff4" stroke="#49a049"/><path d="M11 18h11M15 15v6" stroke="#49a049"/>') +
  ti('open', '<path d="M1 14C2 6 10 3 17 5s6 13-1 16c-4 2-3-4-7-2s-8 1-8-5z" fill="#cfe2ed"/><circle cx="7" cy="11" r="2" fill="#3aa345"/><circle cx="12" cy="8.500" r="2" fill="#e8b52a"/><circle cx="5.500" cy="15" r="1.800" fill="#c5382f"/><path d="M13 23L20 4" stroke="#c77f30" stroke-width="2.500"/><path d="M18 5l2-5 3 3-3 4z" fill="#e6be8a"/>') +
  `<div class="t"><svg width="100" height="24" viewBox="1044 992 100 24" fill="none" stroke="#fff" stroke-width="1.300"><path d="M1047 1007l5-5 5 5M1071 998.500h13v9h-13M1071 1012h9M1077 1008v4M1068.500 997h4v4h-4zM1070.500 1001v8M1092 1002h2l4-4v12l-4-4h-2z"/><circle cx="1103" cy="1007" r="4" fill="#d83434" stroke="none"/><path d="M1101 1005l4 4M1105 1005l-4 4" stroke-width="1"/><path d="M1117 996h14v14h-5l-3 3v-3h-6z" fill="#fff"/><path d="M1119 999.500h10M1119 1002.500h10M1119 1005.500h6" stroke="#122"/></svg><ui-text style="margin:0 14px 0 -3px;font-size:14px;font-weight:300">英</ui-text><svg width="14" height="16"><path d="M0 1h14v14H0z" fill="#fff"/><path d="M5 4L4 7.500h6c0 3 0 5-3 4" fill="none" stroke="#111" stroke-width="1.300"/></svg>
  <div class="k"><ui-text w="58">下午 04:16</ui-text><ui-text w="66">2016/11/17</ui-text></div><div class="e"></div></div>`);

make('desk-top', ':host{position:relative;width:1280px;height:1024px;overflow:hidden}', '<excel-window></excel-window><task-bar></task-bar><cad-window></cad-window><browser-window></browser-window>');
</script>
</body>
</html>
